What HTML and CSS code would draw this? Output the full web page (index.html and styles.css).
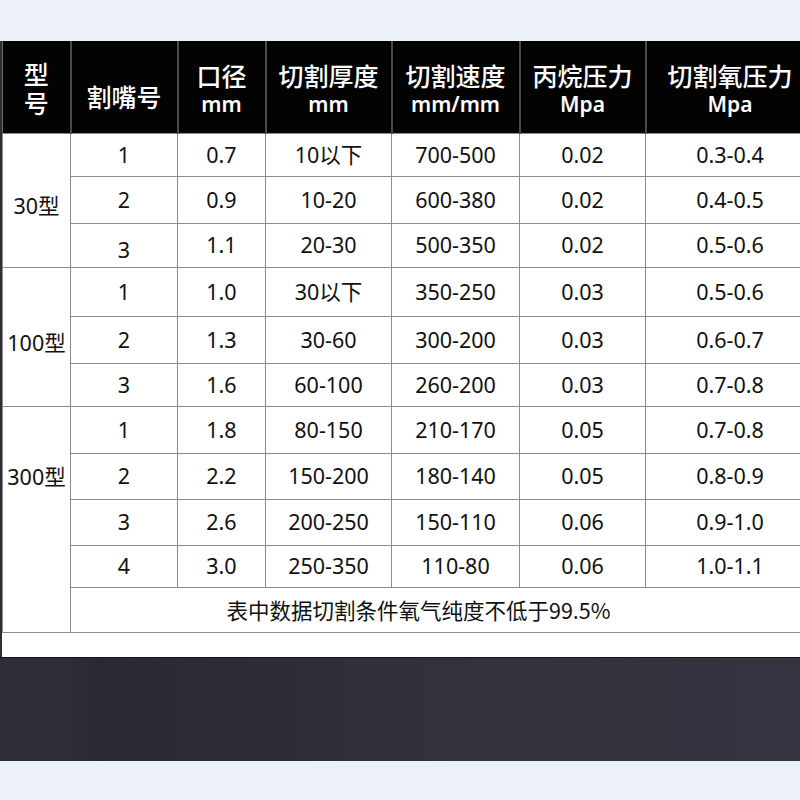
FILE: index.html
```html
<!DOCTYPE html>
<html lang="zh">
<head>
<meta charset="utf-8">
<title>割嘴参数表</title>
<link rel="stylesheet" href="styles.css">
</head>
<body>
<div class="page">
  <div class="top"></div>
  <div class="sheet">
    <table class="spec">
      <colgroup>
        <col class="w1"><col class="w2"><col class="w3"><col class="w4"><col class="w5"><col class="w6"><col class="w7">
      </colgroup>
      <thead>
        <tr class="head">
          <th class="stack">型<br>号</th>
          <th class="single">割嘴号</th>
          <th>口径<br><span class="unit">mm</span></th>
          <th>切割厚度<br><span class="unit">mm</span></th>
          <th>切割速度<br><span class="unit">mm/mm</span></th>
          <th>丙烷压力<br><span class="unit">Mpa</span></th>
          <th>切割氧压力<br><span class="unit">Mpa</span></th>
        </tr>
      </thead>
      <tbody>
        <tr class="r43"><td rowspan="3" class="grp">30型</td><td>1</td><td>0.7</td><td>10以下</td><td>700-500</td><td>0.02</td><td>0.3-0.4</td></tr>
        <tr class="r47"><td>2</td><td>0.9</td><td>10-20</td><td>600-380</td><td>0.02</td><td>0.4-0.5</td></tr>
        <tr class="r44"><td class="low">3</td><td>1.1</td><td>20-30</td><td>500-350</td><td>0.02</td><td>0.5-0.6</td></tr>
        <tr class="r49"><td rowspan="3" class="grp">100型</td><td>1</td><td>1.0</td><td>30以下</td><td>350-250</td><td>0.03</td><td>0.5-0.6</td></tr>
        <tr class="r47"><td>2</td><td>1.3</td><td>30-60</td><td>300-200</td><td>0.03</td><td>0.6-0.7</td></tr>
        <tr class="r43"><td>3</td><td>1.6</td><td>60-100</td><td>260-200</td><td>0.03</td><td>0.7-0.8</td></tr>
        <tr class="r47"><td rowspan="5" class="grp grp-top">300型</td><td>1</td><td>1.8</td><td>80-150</td><td>210-170</td><td>0.05</td><td>0.7-0.8</td></tr>
        <tr class="r46"><td>2</td><td>2.2</td><td>150-200</td><td>180-140</td><td>0.05</td><td>0.8-0.9</td></tr>
        <tr class="r46"><td>3</td><td>2.6</td><td>200-250</td><td>150-110</td><td>0.06</td><td>0.9-1.0</td></tr>
        <tr class="r42"><td>4</td><td>3.0</td><td>250-350</td><td>110-80</td><td>0.06</td><td>1.0-1.1</td></tr>
        <tr class="r45"><td colspan="6" class="note">表中数据切割条件氧气纯度不低于99.5%</td></tr>
      </tbody>
    </table>
    <div class="sheet-foot"></div>
  </div>
  <div class="band"></div>
</div>
</body>
</html>
```
FILE: styles.css
```css
html, body {
  margin: 0;
  padding: 0;
  background: #ecf0f9;
  overflow: hidden;
}

.page {
  width: 800px;
  height: 800px;
  overflow: hidden;
  font-family: "Noto Sans", "Noto Sans CJK SC", sans-serif;
}

.top {
  height: 41px;
  background: #ecf0f9;
}

.sheet {
  background: #ffffff;
  border-left: 2px solid #2e2e36;
  width: 830px;
}

.spec {
  border-collapse: collapse;
  table-layout: fixed;
  width: 812px;
}

.w1 { width: 68px; }
.w2 { width: 107px; }
.w3 { width: 88px; }
.w4 { width: 126px; }
.w5 { width: 128px; }
.w6 { width: 126px; }
.w7 { width: 169px; }

.head {
  height: 92px;
}

.spec th {
  background: #030303;
  color: #ffffff;
  padding: 5px 0 0;
  font-family: "Noto Sans CJK SC", sans-serif;
  font-weight: 500;
  font-size: 25px;
  line-height: 26px;
  text-align: center;
  vertical-align: middle;
  border-left: 2px solid #4a4a4a;
  border-right: 2px solid #4a4a4a;
}

.spec th:first-child {
  border-left: 1px solid #6a6a6a;
}

.spec th .unit {
  font-family: "Noto Sans", sans-serif;
  font-weight: 600;
  font-size: 21px;
}

.spec th.stack {
  line-height: 29px;
  padding-top: 2px;
}

.spec th.single {
  padding-top: 18px;
}

.spec td {
  border: 1.5px solid #8c8c8c;
  padding: 0;
  text-align: center;
  vertical-align: middle;
  font-size: 21.5px;
  color: #111111;
  line-height: 24px;
}

.spec td.grp {
  border-left: 1px solid #8c8c8c;
  padding-top: 12px;
}

.spec td.grp-top {
  vertical-align: top;
  padding-top: 58px;
}

.spec td.low {
  padding-top: 10px;
}

.spec td.note {
  font-family: "Noto Sans CJK SC", sans-serif;
  font-size: 21.5px;
  padding-right: 48px;
}

.r42 { height: 42px; }
.r43 { height: 43px; }
.r44 { height: 44px; }
.r45 { height: 45px; }
.r46 { height: 46px; }
.r47 { height: 47px; }
.r49 { height: 49px; }

.sheet-foot {
  height: 24px;
  background: #ffffff;
}

.band {
  height: 103px;
  border-top: 1px solid #14141a;
  background: linear-gradient(90deg, #2f2e37 0, #2f2e37 8%, #2a2931 12%, #2d2c35 30%, #33313c 55%, #35333f 100%);
}
```
